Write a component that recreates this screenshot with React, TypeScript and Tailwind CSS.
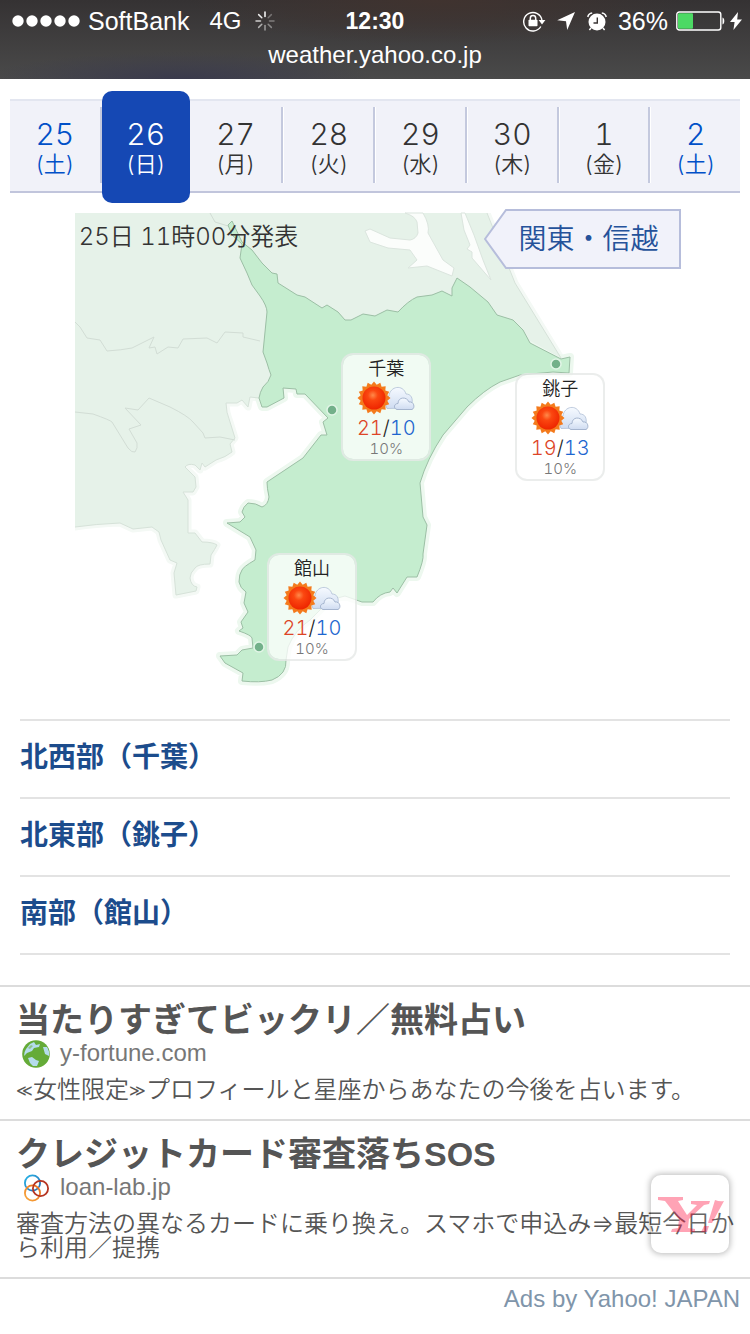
import React from 'react';

type Day = { date: string; weekday: string; tone: 'normal' | 'saturday' | 'active' };

const DAYS: Day[] = [
  { date: '25', weekday: '土', tone: 'saturday' },
  { date: '26', weekday: '日', tone: 'active' },
  { date: '27', weekday: '月', tone: 'normal' },
  { date: '28', weekday: '火', tone: 'normal' },
  { date: '29', weekday: '水', tone: 'normal' },
  { date: '30', weekday: '木', tone: 'normal' },
  { date: '1', weekday: '金', tone: 'normal' },
  { date: '2', weekday: '土', tone: 'saturday' },
];

const TONES = {
  normal: 'flex-1 text-[#333333]',
  saturday: 'flex-1 text-[#0050c8]',
  active: 'relative z-10 -mt-[10px] -mb-[12px] w-[88px] rounded-[10px] bg-[#1548b4] pt-[10px] pb-[12px] text-white',
};

const AREAS = ['北西部（千葉）', '北東部（銚子）', '南部（館山）'];

const CITIES = [
  { name: '千葉', high: 21, low: 10, rain: '10%', place: 'left-[45.5%] top-[32%]' },
  { name: '銚子', high: 19, low: 13, rain: '10%', place: 'left-[68.7%] top-[36%]' },
  { name: '館山', high: 21, low: 10, rain: '10%', place: 'left-[35.6%] top-[72%]' },
];

function Spinner() {
  const shades = [1, 0.3, 0.35, 0.4, 0.5, 0.6, 0.75, 0.9];
  return (
    <svg className="h-5 w-5" viewBox="-10 -10 20 20" aria-hidden="true">
      {shades.map((opacity, i) => (
        <line key={i} x1="0" y1="-4.5" x2="0" y2="-9" stroke="#fff" strokeWidth="1.5" strokeLinecap="round" opacity={opacity} transform={`rotate(${i * 45})`} />
      ))}
    </svg>
  );
}

function StatusBar() {
  return (
    <header className="bg-[radial-gradient(ellipse_at_24%_100%,#3a3a4c_0%,transparent_24%),radial-gradient(ellipse_at_58%_0%,#40332f_0%,transparent_40%),linear-gradient(to_bottom,#353233,#4a4a4a)] pb-[9px] font-['Liberation_Sans',Arial,sans-serif] text-white">
      <div className="grid h-10 grid-cols-[1fr_auto_1fr] items-center pt-[2px] pr-3 pl-3">
        <div className="flex items-center">
          <svg className="mr-2 h-3 w-[68px]" viewBox="0 0 68 12" aria-hidden="true">
            {[6, 20, 34, 48, 62].map((x) => (
              <circle key={x} cx={x} cy="6" r="5.7" fill="#fff" />
            ))}
          </svg>
          <span className="text-[25px] leading-8">SoftBank</span>
          <span className="mr-[14px] ml-5 text-[24px] leading-8">4G</span>
          <Spinner />
        </div>
        <span className="text-[23px] leading-8 font-bold">12:30</span>
        <div className="-mr-1 flex items-center justify-end">
          <svg className="h-[22px] w-6" viewBox="0 0 24 22" fill="none" aria-hidden="true">
            <path d="M18.8 16.5A9.2 9.2 0 1 1 20 10.5" stroke="#fff" strokeWidth="1.4" />
            <path d="M16.6 10h6.8L20 14.5z" fill="#fff" />
            <rect x="6.5" y="9.8" width="9" height="6.4" rx=".8" fill="#fff" />
            <path d="M8.3 10V8.2a2.7 2.7 0 0 1 5.4 0V10" stroke="#fff" strokeWidth="1.5" />
          </svg>
          <svg className="ml-[11px] h-[18px] w-[18px]" viewBox="0 0 18 18" aria-hidden="true">
            <path d="M18 0 10.2 18 9 9.2.2 8.2z" fill="#fff" />
          </svg>
          <svg className="ml-3 h-[19px] w-5" viewBox="0 0 20 19" fill="none" aria-hidden="true">
            <circle cx="10" cy="10" r="8.5" fill="#fff" />
            <path d="M10.3 5.5V11H6.5" stroke="#3a3534" strokeWidth="1.4" />
            <path d="M.8 5A5 5 0 0 1 5.2.9M14.8.9A5 5 0 0 1 19.2 5M4 16l-1.6 2M16 16l1.6 2" stroke="#fff" strokeWidth="1.5" />
          </svg>
          <span className="ml-[11px] text-[25px] leading-8">36%</span>
          <svg className="ml-2 h-5 w-[50px]" viewBox="0 0 50 20" fill="none" aria-hidden="true">
            <rect x=".8" y="1" width="44" height="18" rx="2.5" stroke="#fff" strokeWidth="1.4" />
            <rect x="2" y="2.3" width="15" height="15.4" rx="1" fill="#4cd964" />
            <path d="M46.5 6.5c2.4.8 2.4 6.2 0 7z" fill="#fff" />
          </svg>
          <svg className="ml-1 h-[18px] w-3" viewBox="0 0 12 18" aria-hidden="true">
            <path d="M8 0 0 10h4.6L3.4 18 12 7.4H7.2z" fill="#fff" />
          </svg>
        </div>
      </div>
      <p className="text-center text-[24px] leading-[30px]">weather.yahoo.co.jp</p>
    </header>
  );
}

function DayTabs() {
  return (
    <nav className="mx-[10px] mt-5 flex h-[94px] border-t-2 border-b-2 border-t-[#e3e6f0] border-b-[#c1c5dc] bg-[#f1f2f9]">
      {DAYS.map((day, i) => (
        <a key={i} href={`#day-${day.date}`} className={`flex ${TONES[day.tone]}`}>
          {i > 2 && <span className="mt-[6px] h-[76px] w-[3px] border-r border-l-2 border-l-[#c4c9de] border-r-white" />}
          <span className="flex flex-1 flex-col items-center pt-[15px]">
            <span className="text-[30px] leading-9">{day.date}</span>
            <span className="text-[22px] leading-6">({day.weekday})</span>
          </span>
          {i === 0 && <span className="mt-[6px] h-[76px] w-[2px] bg-[#c4c9de]" />}
        </a>
      ))}
    </nav>
  );
}

function WeatherIcon() {
  const points = Array.from({ length: 32 }, (_, i) => {
    const r = i % 2 === 0 ? 16.5 : 13.6;
    const a = (i * Math.PI) / 16;
    return `${(17 + r * Math.sin(a)).toFixed(1)},${(17 - r * Math.cos(a)).toFixed(1)}`;
  }).join(' ');
  return (
    <svg className="h-[34px] w-[58px]" viewBox="0 0 58 34" role="img" aria-label="晴時々曇">
      <defs>
        <radialGradient id="sunFace" cx="45%" cy="38%" r="62%">
          <stop offset="0" stopColor="#ff8a4a" />
          <stop offset=".35" stopColor="#fb4710" />
          <stop offset="1" stopColor="#ee2500" />
        </radialGradient>
        <linearGradient id="cloudFill" x1="0" y1="0" x2="0" y2="1">
          <stop offset="0" stopColor="#f6faff" />
          <stop offset="1" stopColor="#cfdcf1" />
        </linearGradient>
      </defs>
      <path d="M30 27.5c-4-9-1-12 2-12.5 1-10 14-12 17-2 5 0 7 4 6 10l-4 4z" fill="url(#cloudFill)" stroke="#b0bfd6" strokeWidth=".8" />
      <path d="M40 28.5c-4-1-3-6 1-6 0-7 9-7 11-1.5 5-1 6.500 6 3 7.500z" fill="url(#cloudFill)" stroke="#9eafca" strokeWidth=".9" />
      <polygon points={points} fill="#f47a1c" />
      <circle cx="17" cy="17" r="11.5" fill="url(#sunFace)" />
    </svg>
  );
}

const CHIBA =
  'M232 221 228 225 232 235 242 244 240 258 247 273 252 285 260 296Q267 306 267 312L263 352 267 363Q269 370 271 375 269 382 263 387 260 392 259 398L262 407H267L284 398 283 388 296 389 297 394H305L328 418 323 422 327 435H321L303 458 267 482Q267 488 269 497 268 505 262 507 256 503 248 503 243 507 242 512L245 517 240 522 227 523 250 537 256 550 255 560Q243 567 242 570 239 574 239 582 240 588 246 592L244 603 248 612 241 622 243 628 239 631Q251 635 252 638L253 648 242 650 237 655 220 656 225 663 243 673 242 681Q260 683 272 680 287 674 286 660L288 647Q295 630 310 620L330 600 345 596 362 602H373Q380 593 390 592L393 588 397 593 407 577H417Q424 560 423 554L427 525 423 517 420 483Q427 459 443 435L467 407Q484 390 500 382L520 375 553 372 569 373 570 357 561 359 530 343 523 330 513 320 497 315 488 302 470 287 457 278 452 288V296L442 291 432 295 417 297Q408 301 398 312L387 310 375 316 363 314 351 320H345L338 312 327 305 322 308 305 297 297 295 278 283 277 274 272 273 262 263 252 250 242 242Z';

const NEIGHBOURS =
  'M75 213H487L515 283 561 358 457 300 345 340 259 398 250 397 248 407 242 400 237 403 226 403Q226 412 230 422L235 438 230 444 232 452Q226 457 216 460L205 467 202 463 200 470 195 465Q188 463 185 467L195 477 196 487 193 492H183L188 500V533L195 533 202 542Q213 542 217 545 215 549 211 555L210 564Q198 564 195 568 190 573 190 578 191 586 197 587L196 591 176 595 174 573 177 563 170 560 161 540 159 532 152 527 133 529 120 523Q96 524 75 527Z';

function MapCanvas() {
  return (
    <svg className="block h-auto w-full" viewBox="0 193 750 500" aria-hidden="true">
      <path d={NEIGHBOURS} fill="none" stroke="#f4f9f5" strokeWidth="7" strokeLinejoin="round" />
      <path d={CHIBA} fill="none" stroke="#edf8ef" strokeWidth="8" strokeLinejoin="round" />
      <path d="M60 200h15v340H60zM60 200h440v13H60z" fill="#fff" />
      <path d={NEIGHBOURS} fill="#e6f2e9" />
      <path d="M487 213 515 283 561 358M259 398 250 397 248 407 242 400 237 403 226 403Q226 412 230 422L235 438 230 444 232 452Q226 457 216 460L205 467 202 463 200 470 195 465Q188 463 185 467L195 477 196 487 193 492H183L188 500V533L195 533 202 542Q213 542 217 545 215 549 211 555L210 564Q198 564 195 568 190 573 190 578 191 586 197 587L196 591 176 595 174 573 177 563 170 560 161 540 159 532 152 527 133 529 120 523Q96 524 75 527" fill="none" stroke="#d6e2d9" />
      <g fill="none" stroke="#d2ddd5" strokeLinejoin="round">
        <path d="M75 322 80 327 87 338 100 340 107 351Q122 350 132 348L154 337 149 348 155 347 157 354 168 347 178 348 183 339 207 338 217 343 225 332 243 333 243 337 260 341" />
        <path d="M75 412 93 414Q110 420 112 422L128 448Q132 453 135 452 138 448 137 443L129 429 141 425 125 408 138 410 149 398 170 407Q188 416 193 422L203 433 205 438 220 437 235 440" />
        <path d="M210 213 215 222 228 226M305 297" />
      </g>
      <g fill="#fbfdfb" stroke="#dbe5de">
        <path d="M405 213Q415 216 417 222L418 233Q416 239 410 240L390 238 370 229 365 231 370 242 388 248 410 250 417 260 408 268 427 266 452 276 454 268 443 260 428 233Q430 225 423 213Z" />
        <path d="M461 213 464 230 470 245 467 249 472 252V258L491 280 483 260 474 235 465 213Z" />
      </g>
      <path d={CHIBA} fill="#c5edcf" stroke="#9cbfa5" strokeLinejoin="round" />
      {[
        [332, 410],
        [556, 364],
        [259, 647],
      ].map(([x, y]) => (
        <circle key={x} cx={x} cy={y} r="5" fill="#73b08a" stroke="#e2f5e7" strokeWidth="1.5" />
      ))}
    </svg>
  );
}

function WeatherMap() {
  return (
    <section className="relative" aria-label="千葉県の天気">
      <MapCanvas />
      <p className="absolute top-[5.6%] left-[10.5%] text-[24px] leading-8 text-[#333333]">25日 11時00分発表</p>
      <a href="#kanto" className="absolute top-[3.2%] right-[9.2%] flex h-[60px] w-[197px] items-center justify-center pl-3 text-[28px] text-[#25529a]">
        <svg className="absolute inset-0 h-full w-full" viewBox="0 0 197 60" aria-hidden="true">
          <path d="M1 30 22 1H196V59H22Z" fill="#f1f2fa" stroke="#b6bddb" strokeWidth="2" />
        </svg>
        <span className="relative">関東・信越</span>
      </a>
      {CITIES.map((city) => (
        <a key={city.name} href={`#${city.name}`} className={`absolute flex h-[108px] w-[90px] flex-col items-center rounded-xl border-2 border-[#e6e9e7]/80 bg-white/75 bg-clip-padding pt-[2px] ${city.place}`}>
          <span className="text-[18px] leading-6 text-[#222222]">{city.name}</span>
          <WeatherIcon />
          <span className="text-[20px] leading-[26px] text-[#222222]">
            <span className="text-[#dd4527]">{city.high}</span>/<span className="text-[#1d66cf]">{city.low}</span>
          </span>
          <span className="text-[15px] leading-4 text-[#777777]">{city.rain}</span>
        </a>
      ))}
    </section>
  );
}

function AreaList() {
  return (
    <ul className="mx-5 mt-[26px] border-t-2 border-[#e3e3e3]">
      {AREAS.map((area) => (
        <li key={area} className="border-b-2 border-[#e3e3e3]">
          <a href={`#${area}`} className="block h-[76px] text-[28px] leading-[72px] font-bold text-[#1c4c8c]">
            {area}
          </a>
        </li>
      ))}
    </ul>
  );
}

function GlobeIcon() {
  return (
    <svg className="h-7 w-7" viewBox="0 0 28 28" aria-hidden="true">
      <circle cx="14" cy="14" r="13.8" fill="#65ab38" />
      <path d="M4 9 8 4 12 2 14 5 18 4 17 7 12 8 10 11 5 13 2 16Q2 12 4 9ZM6 18 10 17 14 20 17 21 15 26 11 26 8 23ZM21 7 25 7Q28 12 27 16L23 14Z" fill="#b5dcec" />
      <path d="M6 8 9 5 11 6 8 9Z" fill="#8fc48a" />
    </svg>
  );
}

function RingsIcon() {
  return (
    <svg className="h-7 w-7" viewBox="0 0 28 28" fill="none" strokeWidth="1.8" aria-hidden="true">
      <defs>
        <linearGradient id="ringBlue" x1="0" y1="0" x2="1" y2="1"><stop stopColor="#27b5e8" /><stop offset="1" stopColor="#2868b0" /></linearGradient>
        <linearGradient id="ringOrange" x1="1" y1="0" x2="0" y2="1"><stop stopColor="#e86a1c" /><stop offset="1" stopColor="#f9a93c" /></linearGradient>
      </defs>
      <circle cx="10.5" cy="9" r="7.6" stroke="url(#ringBlue)" />
      <circle cx="10.5" cy="19" r="7.6" stroke="url(#ringOrange)" />
      <circle cx="18.5" cy="14.5" r="7.6" stroke="#b63422" />
    </svg>
  );
}

function Ad({ title, site, icon, children }: { title: string; site: string; icon: React.ReactNode; children: React.ReactNode }) {
  return (
    <article className="border-b-2 border-[#dcdcdc] pt-[15px] pr-2 pb-[17px] pl-4 text-[#555555]">
      <h2 className="text-[34px] leading-9 font-bold font-['Liberation_Sans','Noto_Sans_CJK_JP',sans-serif]">
        <a href={`#${site}`}>{title}</a>
      </h2>
      <p className="flex h-8 items-center gap-[10px] pl-[6px] font-['Liberation_Sans',Arial,sans-serif] text-[24px] text-[#777777]">
        {icon}
        <span className="pb-[3px] leading-7">{site}</span>
      </p>
      <p className="mt-2 text-[24px] leading-6">{children}</p>
    </article>
  );
}

export default function App() {
  return (
    <div className="min-h-screen bg-white font-['Inter','Noto_Sans_CJK_JP',sans-serif] font-[350] tabular-nums">
      <StatusBar />
      <main>
        <DayTabs />
        <WeatherMap />
        <AreaList />
        <section className="relative mt-[30px] border-t-2 border-[#dcdcdc]" aria-label="広告">
          <Ad title="当たりすぎてビックリ／無料占い" site="y-fortune.com" icon={<GlobeIcon />}>
            <span className="align-middle font-['DejaVu_Sans',sans-serif] text-[16px] leading-none">≪</span>女性限定
            <span className="align-middle font-['DejaVu_Sans',sans-serif] text-[16px] leading-none">≫</span>プロフィールと星座からあなたの今後を占います。
          </Ad>
          <Ad title="クレジットカード審査落ちSOS" site="loan-lab.jp" icon={<RingsIcon />}>
            審査方法の異なるカードに乗り換え。スマホで申込み⇒最短今日から利用／提携
          </Ad>
          <a href="#menu" aria-label="Yahoo! JAPAN メニュー" className="absolute right-[21px] bottom-[26px] h-[78px] w-[78px] rounded-[10px] bg-white/10 shadow-[0_0_6px_1px_rgba(0,0,0,0.28)]">
            <svg className="h-full w-full" viewBox="0 0 78 78" fill="#ff0033" fillOpacity=".36" aria-hidden="true">
              <path d="M7 22H32V25L27 26 36 40 46 30 40 29V26H59L58 29 53 30 38 44 37 53 44 54V57H20L21 54 27 53 28 44 14 26 7 25Z" />
              <path d="M64 25Q69 27 73 26L61 48H57ZM53 51H58L56 57H50Z" />
            </svg>
          </a>
        </section>
      </main>
      <footer className="px-[10px] pt-[2px] text-right font-['Liberation_Sans',Arial,sans-serif] text-[24px] leading-9 text-[#8095aa]">Ads by Yahoo! JAPAN</footer>
    </div>
  );
}
